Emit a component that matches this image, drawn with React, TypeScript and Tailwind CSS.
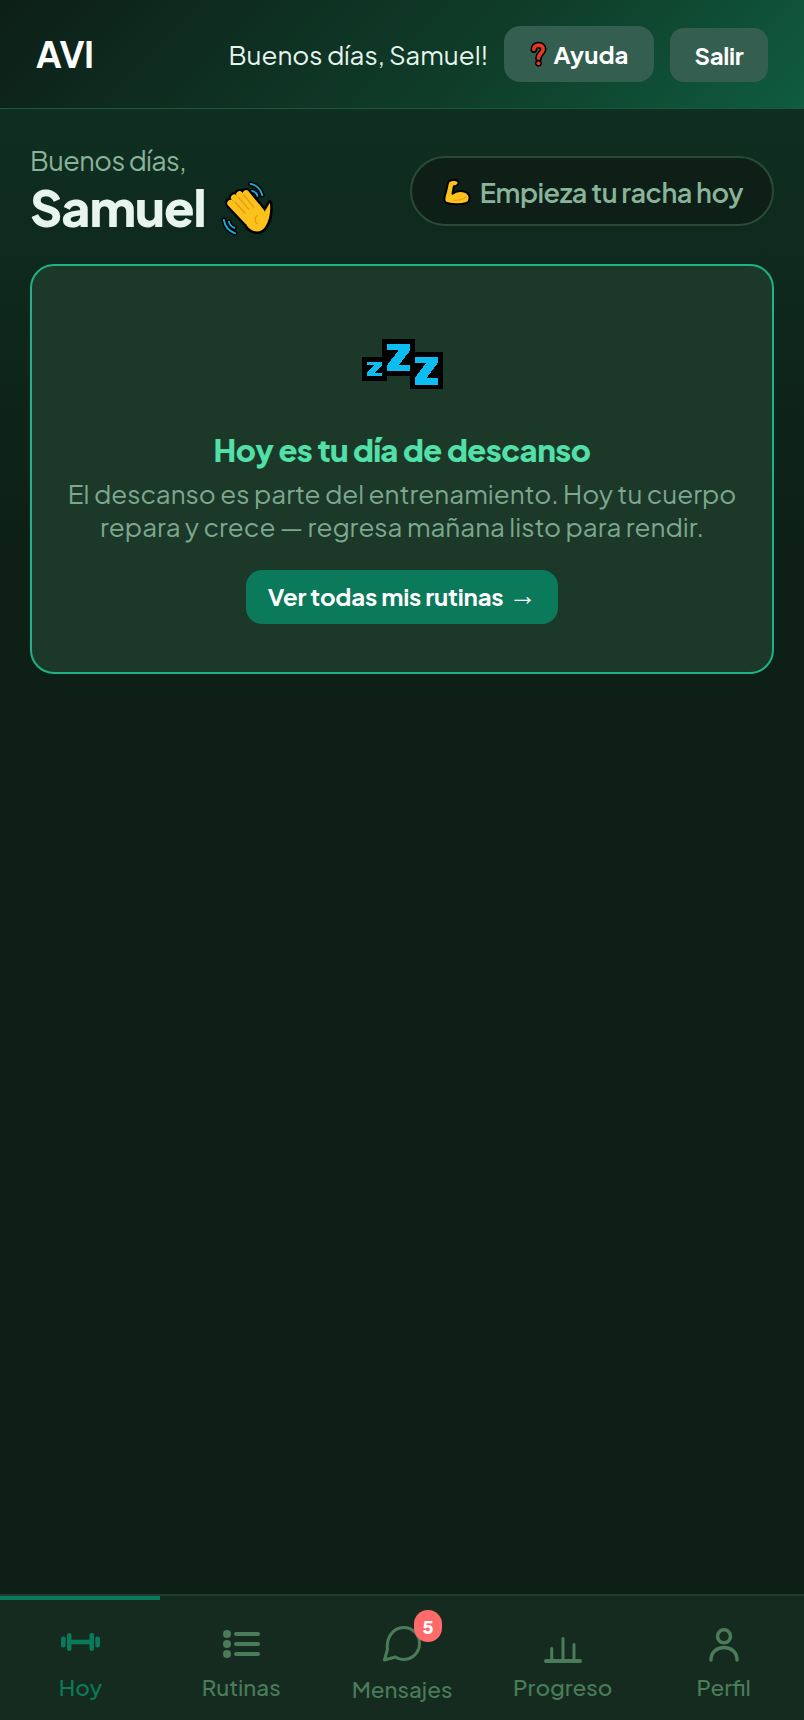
import React from "react";

const F = '[font-family:"Plus_Jakarta_Sans",Inter,"Noto_Sans",sans-serif]';

function Wave({ className = "" }: { className?: string }) {
  const fingers = [
    "M48 104L100 146",
    "M56 88L112 134",
    "M69 77L124 124",
    "M86 72L134 116",
  ];
  const palm = "M88 120L126 96C138 110 140 124 146 108L154 88C160 110 160 136 150 156C140 174 118 176 100 158Z";
  const arcs = ["M106 43C122 46 134 58 138 74", "M110 62C118 64 123 69 125 76", "M33 141C36 158 46 172 64 178", "M47 146C49 154 54 160 62 163"];
  return (
    <svg viewBox="20 30 150 155" className={className}>
      <g fill="none" stroke="#000" strokeWidth="13" strokeLinecap="round">
        {arcs.map((d) => <path key={d} d={d} />)}
      </g>
      <g fill="none" stroke="#12b2e6" strokeWidth="5" strokeLinecap="round">
        {arcs.map((d) => <path key={d} d={d} />)}
      </g>
      <g transform="rotate(8 110 125)">
        <g fill="none" stroke="#000" strokeWidth="30" strokeLinecap="round">
          {fingers.map((d) => <path key={d} d={d} />)}
        </g>
        <path d={palm} fill="#000" stroke="#000" strokeWidth="14" strokeLinejoin="round" />
        <g fill="none" stroke="#fcc21b" strokeWidth="18" strokeLinecap="round">
          {fingers.map((d) => <path key={d} d={d} />)}
        </g>
        <path d={palm} fill="#fcc21b" />
        <g fill="none" stroke="#e39a10" strokeWidth="3.500" strokeLinecap="round">
          <path d="M60 100L92 126" />
          <path d="M68 86L100 114" />
          <path d="M80 76L112 106" />
          <path d="M124 128C118 136 120 146 128 150" />
        </g>
      </g>
    </svg>
  );
}

function Muscle({ className = "" }: { className?: string }) {
  return (
    <svg viewBox="22 22 95 90" className={className}>
      <path
        d="M45 35C55 28 72 30 74 38C76 46 65 50 60 50L56 72C68 62 90 62 100 70C110 78 110 95 98 100C80 106 50 105 35 98C28 92 32 80 36 68C40 55 40 42 45 35Z"
        fill="#fcc21b"
        stroke="#000"
        strokeWidth="6"
        strokeLinejoin="round"
      />
      <path d="M60 92C75 92 88 90 98 82" fill="none" stroke="#e39a10" strokeWidth="3" strokeLinecap="round" />
    </svg>
  );
}

function Question({ className = "" }: { className?: string }) {
  const d = "M3.500 8.200C3.500 2.500 12.500 2.500 12.500 8C12.500 11.500 8 12 8 16.500";
  return (
    <svg viewBox="0 0 16 25" className={className} fill="none" strokeLinecap="round">
      <path d={d} stroke="#000" strokeWidth="6.500" />
      <circle cx="8" cy="21.500" r="3.200" fill="#000" />
      <path d={d} stroke="#e8391f" strokeWidth="3.500" />
      <circle cx="8" cy="21.500" r="1.900" fill="#e8391f" />
    </svg>
  );
}

function zPath(x: number, y: number, w: number, h: number, t: number) {
  return `M${x} ${y}H${x + w}V${y + t}L${x + w * 0.5} ${y + h - t}H${x + w}V${y + h}H${x}V${y + h - t}L${x + w * 0.5} ${y + t}H${x}Z`;
}

function Zzz({ className = "" }: { className?: string }) {
  return (
    <svg viewBox="185 57 243 151" className={className} shapeRendering="crispEdges">
      <rect x="185" y="110" width="75" height="75" fill="#000" />
      <rect x="245" y="57" width="100" height="113" fill="#000" />
      <rect x="328" y="95" width="100" height="113" fill="#000" />
      <path d={zPath(200, 125, 45, 45, 11)} fill="#0cbdf2" />
      <path d={zPath(260, 72, 70, 83, 19)} fill="#0cbdf2" />
      <path d={zPath(343, 110, 70, 85, 19)} fill="#0cbdf2" />
    </svg>
  );
}

function NavItem({ label, active, children, labelClass = "" }: { label: string; active?: boolean; children: React.ReactNode; labelClass?: string }) {
  return (
    <div className="relative flex flex-1 flex-col items-center">
      <div className="flex h-[38px] items-end justify-center">{children}</div>
      <span className={`mt-[11px] text-[22.4px] leading-[28px] font-medium ${active ? "text-[#0a7a5a]" : "text-[#4a7c59]"} ${labelClass}`}>{label}</span>
    </div>
  );
}

export default function App() {
  return (
    <div className={`flex h-[1720px] w-[804px] flex-col overflow-hidden bg-[#0d1f17] ${F}`}>
      <header className="flex h-[109px] shrink-0 items-center justify-between border-b border-b-[#1a5c40] bg-[linear-gradient(135deg,#0d1f17_0%,#0f3d2a_60%,#0f5c40_100%)] px-[36px]">
        <span className="text-[36px] leading-none font-bold tracking-[-0.5px] text-white">AVI</span>
        <div className="flex items-center">
          <span className="mr-[16px] text-[26px] text-[#e8f5ee]">Buenos días, Samuel!</span>
          <button className="mr-[16px] flex h-[56px] w-[150px] items-center justify-center gap-[7px] rounded-[16px] bg-[#345e4f] text-[24px] font-bold text-white">
            <Question className="h-[26px] w-[17px]" />
            Ayuda
          </button>
          <button className="mt-[2px] flex h-[54px] w-[98px] items-center justify-center rounded-[14px] bg-[#345e4f] text-[24px] font-bold tracking-[-0.3px] text-white">Salir</button>
        </div>
      </header>

      <main className="flex flex-1 flex-col bg-[linear-gradient(180deg,#0f2e21_0%,#0d1f17_30%)] px-[30px] pt-[34px]">
        <div className="flex items-start justify-between">
          <div>
            <div className="text-[27px] leading-[34px] tracking-[-0.5px] text-[#8ab49a]">Buenos días,</div>
            <div className="flex h-[60px] items-center text-[50px] leading-[60px] font-extrabold tracking-[-1px] text-[#e8f5ee]">
              Samuel
              <Wave className="ml-[14px] h-[57px] w-[55px]" />
            </div>
          </div>
          <div className="mt-[13px] flex h-[70px] w-[364px] items-center justify-center gap-[7px] rounded-full border-2 border-[#2a4a38] bg-[#0d1f17] pt-[2px] text-[27px] font-semibold tracking-[-0.5px] text-[#8ab49a]">
            <Muscle className="h-[30px] w-[32px]" />
            Empieza tu racha hoy
          </div>
        </div>

        <section className="mt-[27px] flex h-[410px] flex-col items-center rounded-[24px] border-2 border-[#1db386] bg-[#1c3829] pt-[73px]">
          <Zzz className="h-[50px] w-[81px]" />
          <h2 className="mt-[42px] text-[31px] leading-[38px] font-extrabold tracking-[-0.5px] text-[#52e0a8]">Hoy es tu día de descanso</h2>
          <p className="mt-[8px] text-center text-[26px] leading-[33px] text-[#7da88e]">
            El descanso es parte del entrenamiento. Hoy tu cuerpo
            <br />
            repara y crece — regresa mañana listo para rendir.
          </p>
          <button className="mt-[27px] flex h-[54px] w-[312px] items-center justify-center gap-[5px] rounded-[16px] bg-[#0a7a5a] pb-[2px] text-[24px] font-bold tracking-[-0.2px] text-white">
            <span>Ver todas mis rutinas</span>
            <span className="font-['Liberation_Sans'] text-[28px] leading-none font-normal">→</span>
          </button>
        </section>
      </main>

      <nav className="relative h-[126px] shrink-0 border-t-2 border-t-[#1f3d2e] bg-[#162b20]">
        <div className="absolute top-0 left-0 h-[4px] w-[160px] bg-[#0a7a5a]" />
        <div className="flex pt-[28px]">
          <NavItem label="Hoy" active>
            <svg width="39" height="18" viewBox="0 0 39 18" fill="#0a7a5a" className="mb-[11px]">
              <rect x="0" y="3.500" width="4.700" height="11" rx="2" />
              <rect x="6" y="0" width="4.500" height="18" rx="2.200" />
              <rect x="10" y="6.700" width="19" height="4.600" />
              <rect x="28.500" y="0" width="4.500" height="18" rx="2.200" />
              <rect x="34.300" y="3.500" width="4.700" height="11" rx="2" />
            </svg>
          </NavItem>
          <NavItem label="Rutinas">
            <svg width="37" height="28" viewBox="0 0 37 28" fill="#4a7c59" className="mb-[4px]">
              <circle cx="4" cy="4" r="4" /><circle cx="4" cy="14" r="4" /><circle cx="4" cy="24" r="4" />
              <rect x="11" y="2" width="26" height="4" rx="2" /><rect x="11" y="12" width="26" height="4" rx="2" /><rect x="11" y="22" width="26" height="4" rx="2" />
            </svg>
          </NavItem>
          <NavItem label="Mensajes" labelClass="translate-y-[2px]">
            <div className="relative">
              <svg width="38" height="36" viewBox="0 0 38 36" fill="none" stroke="#4a7c59" strokeWidth="3" className="block">
                <path d="M1.500 34L4.500 23C3 12 10 1.500 20.500 1.500C30 1.500 36.500 9 36.500 17.500C36.500 27 29 33.500 20 33.500C17 33.500 14 32 12.500 31Z" strokeLinejoin="round" />
              </svg>
              <span className="absolute -top-[16px] -right-[21px] flex h-[32px] w-[28px] items-center justify-center rounded-full bg-[#ff6b6b] text-[18px] font-extrabold text-white">5</span>
            </div>
          </NavItem>
          <NavItem label="Progreso">
            <svg width="38" height="26" viewBox="0 0 38 26" fill="none" stroke="#4a7c59" strokeLinecap="round" strokeWidth="3" className="mb-[-1px]">
              <path d="M7.700 23V11.500M19 23V1.500M30 23V7.500" />
              <path d="M2 24h34" strokeWidth="4" />
            </svg>
          </NavItem>
          <NavItem label="Perfil">
            <svg width="30" height="34" viewBox="0 0 30 34" fill="none" stroke="#4a7c59" strokeWidth="3.500" strokeLinecap="round">
              <circle cx="15" cy="8.300" r="6.500" />
              <path d="M2 32C2 24 8 19.500 15 19.500S28 24 28 32" />
            </svg>
          </NavItem>
        </div>
      </nav>
    </div>
  );
}
